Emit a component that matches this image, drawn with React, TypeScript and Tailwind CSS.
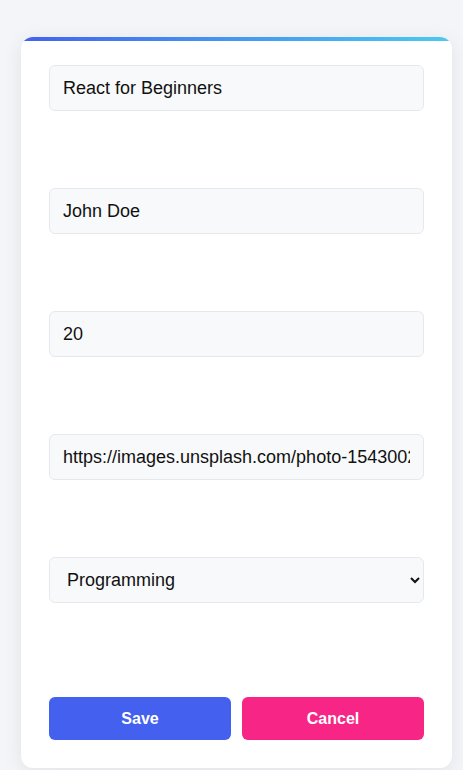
import React from "react";

const fields = [
  { value: "React for Beginners", type: "text" },
  { value: "John Doe", type: "text" },
  { value: "20", type: "number" },
  { value: "https://images.unsplash.com/photo-1543002588-bfa74002ed7e", type: "url" },
];

export default function App() {
  return (
    <div className="min-h-[770px] bg-[#f4f5f9] pt-[37px] font-['Liberation_Sans',Arial,sans-serif]">
      <div className="ml-[21px] w-[431px] overflow-hidden rounded-xl bg-white shadow-[0_4px_20px_rgba(0,0,0,0.08)]">
        <div className="h-1 bg-gradient-to-r from-[#4361ee] to-[#4cc9f0]" />
        <form className="px-[28px] pt-[24px] pb-[28px]">
          {fields.map((f) => (
            <div key={f.value} className="mb-[77px]">
              <input
                type="text"
                defaultValue={f.value}
                className="box-border h-[46px] w-full rounded-md border border-[#e6e8ee] bg-[#f8f9fb] px-[13px] text-[18px] text-[#111] outline-none"
              />
            </div>
          ))}
          <div className="mb-[94px]">
            <select
              defaultValue="Programming"
              className="box-border h-[46px] w-full rounded-md border border-[#e6e8ee] bg-[#f8f9fb] px-[13px] text-[18px] text-[#111] outline-none"
            >
              <option>Programming</option>
              <option>Design</option>
              <option>Business</option>
            </select>
          </div>
          <div className="flex gap-[11px]">
            <button
              type="button"
              className="h-[43px] flex-1 rounded-md bg-[#4361ee] text-[16px] font-bold text-white"
            >
              Save
            </button>
            <button
              type="button"
              className="h-[43px] flex-1 rounded-md bg-[#f72585] text-[16px] font-bold text-white"
            >
              Cancel
            </button>
          </div>
        </form>
      </div>
    </div>
  );
}
